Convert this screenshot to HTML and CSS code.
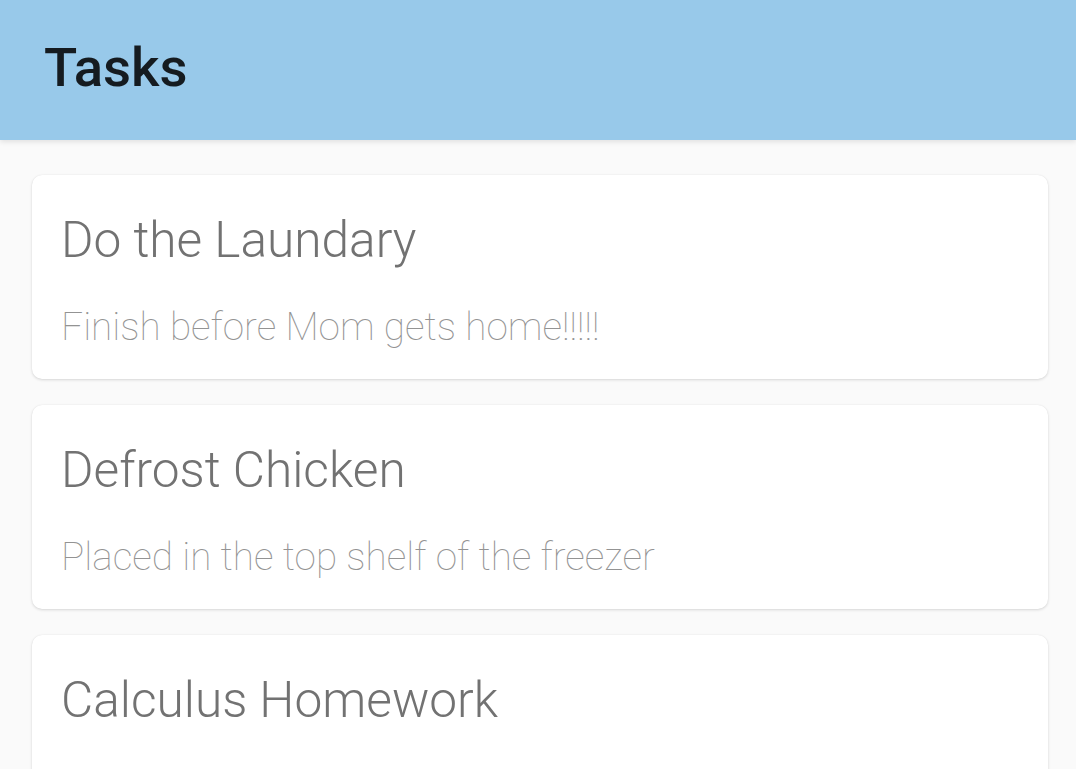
FILE: index.html
```html
<!DOCTYPE html>
<html>
<head>
<meta charset="utf-8">
<link rel="stylesheet" href="styles.css">
</head>
<body>
<header class="toolbar"><h1 class="title">Tasks</h1></header>
<main class="list">
  <div class="card">
    <div class="card-title">Do the Laundary</div>
    <div class="card-sub">Finish before Mom gets home!!!!!</div>
  </div>
  <div class="card">
    <div class="card-title">Defrost Chicken</div>
    <div class="card-sub">Placed in the top shelf of the freezer</div>
  </div>
  <div class="card">
    <div class="card-title">Calculus Homework</div>
  </div>
</main>
</body>
</html>
```
FILE: styles.css
```css
html, body { margin: 0; padding: 0; }
body {
  background: #fafafa;
  font-family: Roboto, "Liberation Sans", sans-serif;
  height: 769px;
  overflow: hidden;
}
.toolbar {
  height: 140px;
  box-sizing: border-box;
  background: #98c9ea;
  box-shadow: 0 2px 5px rgba(0,0,0,0.1);
  display: flex;
  align-items: center;
  padding: 0 44px 6px;
  position: relative;
  z-index: 1;
}
.title {
  margin: 0;
  font-size: 54.5px;
  font-weight: 500;
  color: #151b20;
}
.list {
  padding: 35px 28px 0 32px;
  display: flex;
  flex-direction: column;
  gap: 26px;
}
.card {
  background: #fff;
  border-radius: 10px;
  box-shadow: 0 1px 3px rgba(0,0,0,0.14), 0 0 1px rgba(0,0,0,0.08);
  padding: 36px 30px 28px 29px;
  display: flex;
  flex-direction: column;
  gap: 35px;
  height: 204px;
  box-sizing: border-box;
}
.card-title {
  font-size: 49.6px;
  font-weight: 300;
  color: #727272;
}
.card-sub {
  font-size: 38.7px;
  font-weight: 100;
  color: #939393;
}
```
